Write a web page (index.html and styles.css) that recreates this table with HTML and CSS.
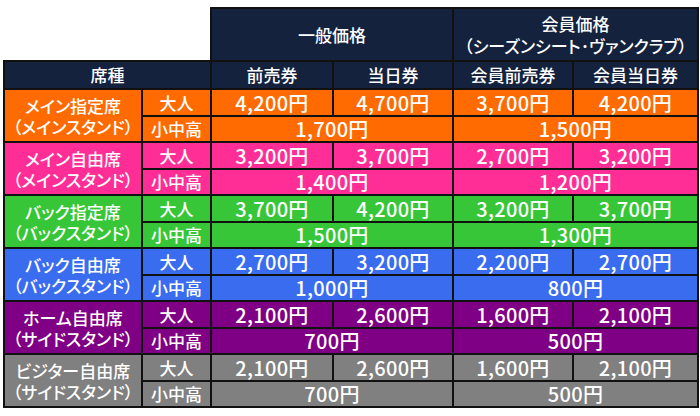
FILE: index.html
```html
<!DOCTYPE html>
<html lang="ja">
<head>
<meta charset="utf-8">
<title>席種・料金表</title>
<link rel="stylesheet" href="styles.css">
</head>
<body>
<div class="wrap">
<table class="price">
  <colgroup>
    <col class="c-seat"><col class="c-age"><col class="c-p1"><col class="c-p2"><col class="c-p3"><col class="c-p4">
  </colgroup>
  <thead>
    <tr class="h1">
      <th class="blank" colspan="2"></th>
      <th class="hd" colspan="2">一般価格</th>
      <th class="hd" colspan="2"><span class="ln">会員価格</span><span class="ln">（シーズンシート･ヴァンクラブ）</span></th>
    </tr>
    <tr class="h2">
      <th class="hd" colspan="2">席種</th>
      <th class="hd">前売券</th>
      <th class="hd">当日券</th>
      <th class="hd">会員前売券</th>
      <th class="hd">会員当日券</th>
    </tr>
  </thead>
  <tbody class="orange">
    <tr class="r1"><td class="seat" rowspan="2"><span class="ln">メイン指定席</span><span class="ln">（メインスタンド）</span></td><td class="age">大人</td><td class="p">4,200円</td><td class="p">4,700円</td><td class="p">3,700円</td><td class="p">4,200円</td></tr>
    <tr class="r2"><td class="age">小中高</td><td class="p" colspan="2">1,700円</td><td class="p" colspan="2">1,500円</td></tr>
  </tbody>
  <tbody class="pink">
    <tr class="r1"><td class="seat" rowspan="2"><span class="ln">メイン自由席</span><span class="ln">（メインスタンド）</span></td><td class="age">大人</td><td class="p">3,200円</td><td class="p">3,700円</td><td class="p">2,700円</td><td class="p">3,200円</td></tr>
    <tr class="r2"><td class="age">小中高</td><td class="p" colspan="2">1,400円</td><td class="p" colspan="2">1,200円</td></tr>
  </tbody>
  <tbody class="green">
    <tr class="r1"><td class="seat" rowspan="2"><span class="ln">バック指定席</span><span class="ln">（バックスタンド）</span></td><td class="age">大人</td><td class="p">3,700円</td><td class="p">4,200円</td><td class="p">3,200円</td><td class="p">3,700円</td></tr>
    <tr class="r2"><td class="age">小中高</td><td class="p" colspan="2">1,500円</td><td class="p" colspan="2">1,300円</td></tr>
  </tbody>
  <tbody class="blue">
    <tr class="r1"><td class="seat" rowspan="2"><span class="ln">バック自由席</span><span class="ln">（バックスタンド）</span></td><td class="age">大人</td><td class="p">2,700円</td><td class="p">3,200円</td><td class="p">2,200円</td><td class="p">2,700円</td></tr>
    <tr class="r2"><td class="age">小中高</td><td class="p" colspan="2">1,000円</td><td class="p" colspan="2">800円</td></tr>
  </tbody>
  <tbody class="purple">
    <tr class="r1"><td class="seat" rowspan="2"><span class="ln">ホーム自由席</span><span class="ln">（サイドスタンド）</span></td><td class="age">大人</td><td class="p">2,100円</td><td class="p">2,600円</td><td class="p">1,600円</td><td class="p">2,100円</td></tr>
    <tr class="r2"><td class="age">小中高</td><td class="p" colspan="2">700円</td><td class="p" colspan="2">500円</td></tr>
  </tbody>
  <tbody class="gray">
    <tr class="r1"><td class="seat" rowspan="2"><span class="ln">ビジター自由席</span><span class="ln">（サイドスタンド）</span></td><td class="age">大人</td><td class="p">2,100円</td><td class="p">2,600円</td><td class="p">1,600円</td><td class="p">2,100円</td></tr>
    <tr class="r2"><td class="age">小中高</td><td class="p" colspan="2">700円</td><td class="p" colspan="2">500円</td></tr>
  </tbody>
</table>
</div>
</body>
</html>
```
FILE: styles.css
```css
html, body {
  margin: 0;
  padding: 0;
  background: #ffffff;
}
.wrap {
  padding: 7px 0 0 3px;
}
.price {
  border-collapse: collapse;
  table-layout: fixed;
  width: 694px;
  font-family: "Noto Sans CJK JP", "Noto Sans", sans-serif;
  font-feature-settings: "palt";
  font-weight: 500;
  color: #ffffff;
}
.c-seat { width: 138px; }
.c-age { width: 69px; }
.c-p1 { width: 122px; }
.c-p2 { width: 120px; }
.c-p3 { width: 120px; }
.c-p4 { width: 125px; }

.price th, .price td {
  border: 2px solid #111111;
  padding: 0;
  text-align: center;
  vertical-align: middle;
  white-space: nowrap;
}
.price .blank {
  border: none;
  background: #ffffff;
}
.ln {
  display: block;
}
.hd {
  background: #14223e;
  font-size: 17px;
  font-weight: 500;
  line-height: 22px;
}
.h1 { height: 53px; }
.h2 { height: 28px; }
.r1 { height: 27px; }
.r2 { height: 26px; }

.seat {
  font-size: 17px;
  line-height: 21px;
}
.age {
  font-size: 17px;
  line-height: 20px;
}
.p {
  font-size: 20px;
  line-height: 20px;
  letter-spacing: 0.3px;
}

.orange td { background: #ff6b00; }
.pink td { background: #ff2e97; }
.green td { background: #37c637; }
.blue td { background: #3a6cf0; }
.purple td { background: #800085; }
.gray td { background: #808080; }
```
